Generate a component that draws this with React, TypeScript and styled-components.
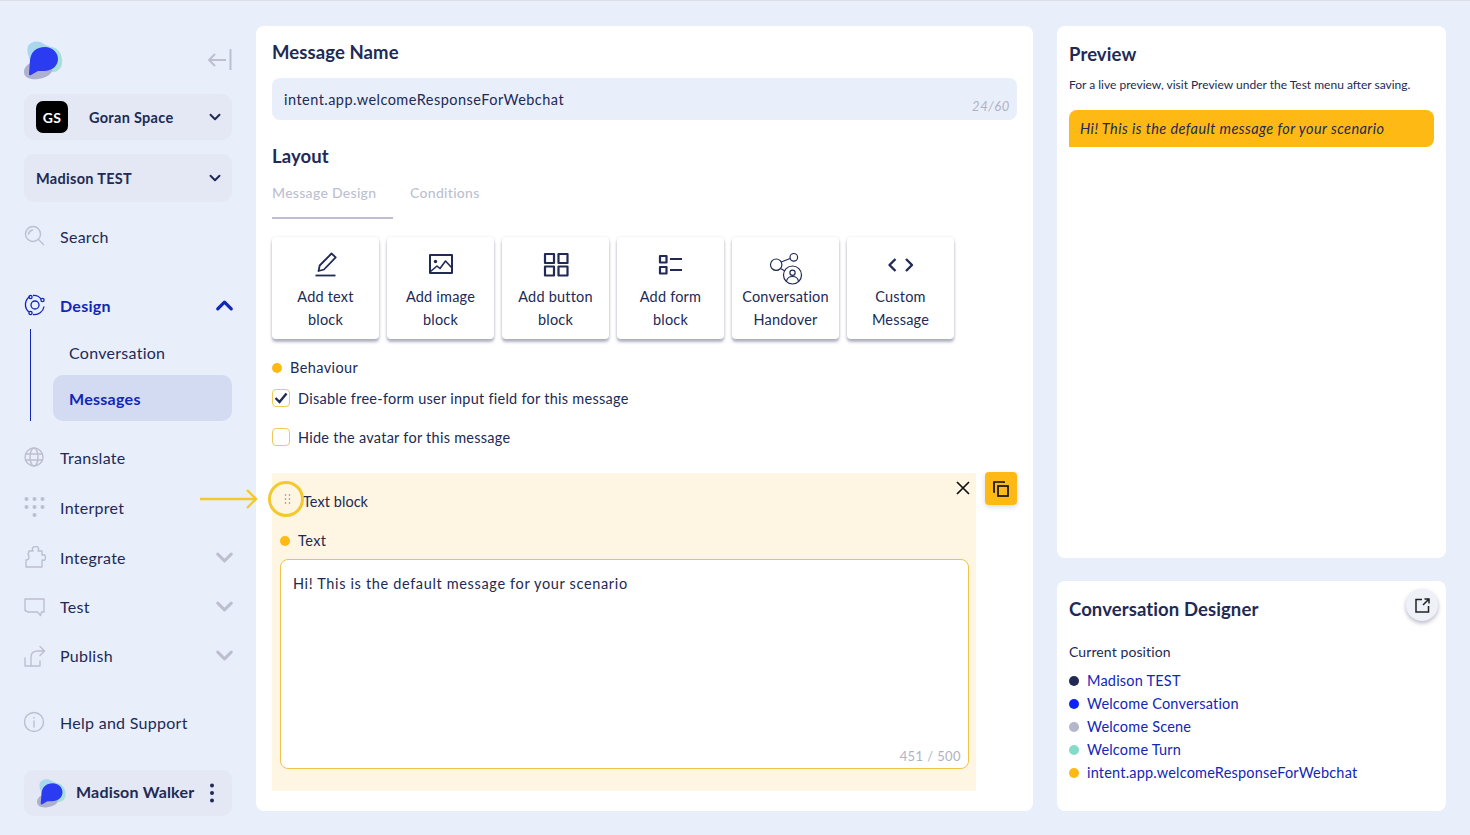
import React from "react";
import styled, { createGlobalStyle } from "styled-components";
import { ChevronDown, ChevronUp } from "lucide-react";

const ink = "#212a55";
const blue = "#1226b8";
const grey = "#bdbfd0";
const amber = "#ffb915";

const GlobalStyle = createGlobalStyle`
  html, body {
    margin: 0;
    padding: 0;
    background: #e9eefb;
  }
  body {
    font-family: "Lato", "Noto Sans", sans-serif;
    color: ${ink};
  }
  * { box-sizing: border-box; }
`;

const Page = styled.div`
  width: 1470px;
  height: 835px;
  display: flex;
  overflow: hidden;
  position: relative;
  border-top: 1px solid #dcdee6;
`;

const Sidebar = styled.aside`
  width: 256px;
  flex: none;
  padding: 39px 24px 0;
  display: flex;
  flex-direction: column;
`;

const LogoRow = styled.div`
  height: 40px;
  display: flex;
  justify-content: space-between;
  align-items: center;
  margin-bottom: 14px;
`;

const SelectBox = styled.div<{ $h: number }>`
  height: ${(p) => p.$h}px;
  background: #e3e8f4;
  border-radius: 10px;
  display: flex;
  align-items: center;
  padding: 0 8px 0 12px;
  margin-bottom: 14px;
  font-size: 14.5px;
  font-weight: 700;
  letter-spacing: 0.3px;
  color: ${ink};
  svg { flex: none; }
`;

const SpaceBadge = styled.div`
  width: 32px;
  height: 32px;
  background: #000;
  color: #fff;
  border-radius: 7px;
  font-size: 14px;
  font-weight: 700;
  display: flex;
  align-items: center;
  justify-content: center;
  margin-right: 21px;
`;

const SelectText = styled.span`
  flex: 1;
`;

const NavItem = styled.div<{ $active?: boolean; $h?: number; $mt?: number }>`
  height: ${(p) => p.$h ?? 50}px;
  margin-top: ${(p) => p.$mt ?? 0}px;
  padding-bottom: 2px;
  display: flex;
  align-items: center;
  font-size: 16px;
  letter-spacing: 0.28px;
  font-weight: ${(p) => (p.$active ? 700 : 400)};
  color: ${(p) => (p.$active ? blue : ink)};
`;

const NavIcon = styled.span`
  width: 36px;
  flex: none;
  display: flex;
  align-items: center;
`;

const NavLabel = styled.span`
  flex: 1;
`;

const NavChevron = styled.span`
  display: flex;
  margin-right: -5.5px;
`;

const SubNav = styled.div`
  margin-left: 6px;
  padding-left: 22px;
  border-left: 1.5px solid ${blue};
  height: 92px;
  margin-bottom: 12px;
  display: flex;
  flex-direction: column;
`;

const SubItem = styled.div<{ $active?: boolean }>`
  height: 46px;
  display: flex;
  align-items: center;
  padding-left: 16px;
  border-radius: 10px;
  font-size: 16px;
  letter-spacing: 0.28px;
  font-weight: ${(p) => (p.$active ? 700 : 400)};
  color: ${(p) => (p.$active ? blue : ink)};
  background: ${(p) => (p.$active ? "#d3dbf3" : "transparent")};
`;

const UserBox = styled.div`
  height: 46px;
  margin-top: 22px;
  background: #e3e8f4;
  border-radius: 10px;
  display: flex;
  align-items: center;
  padding: 0 17px 0 13px;
  font-size: 16px;
  font-weight: 700;
  letter-spacing: 0.18px;
  gap: 9px;
`;

const UserName = styled.span`
  flex: 1;
  margin-bottom: 3px;
`;

const Card = styled.section`
  background: #fff;
  border-radius: 8px;
`;

const MainCard = styled(Card)`
  width: 777px;
  height: 785px;
  margin-top: 25px;
  padding: 15px 16px 16px;
  flex: none;
`;

const H2 = styled.h2`
  margin: 0;
  font-size: 18.5px;
  font-weight: 700;
  letter-spacing: 0.1px;
  line-height: 22px;
  color: ${ink};
`;

const NameInput = styled.div`
  margin-top: 15px;
  height: 42px;
  background: #e9eefb;
  border-radius: 8px;
  display: flex;
  align-items: center;
  justify-content: space-between;
  padding: 0 7px 0 12px;
  font-size: 14.5px;
  letter-spacing: 0.47px;
`;

const Counter = styled.span`
  font-size: 13px;
  font-style: italic;
  color: #b0b2c4;
  align-self: flex-end;
  margin-bottom: 6px;
  letter-spacing: 0.6px;
`;

const LayoutTitle = styled(H2)`
  margin-top: 25px;
`;

const Tabs = styled.div`
  display: flex;
  margin-top: 14px;
  height: 38px;
`;

const Tab = styled.div<{ $active?: boolean }>`
  width: ${(p) => (p.$active ? "121px" : "auto")};
  margin-right: 17px;
  font-size: 14px;
  font-weight: 500;
  letter-spacing: 0.3px;
  line-height: 18px;
  padding-top: 3px;
  color: ${grey};
  border-bottom: ${(p) => (p.$active ? `2px solid ${grey}` : "none")};
`;

const Tiles = styled.div`
  display: flex;
  gap: 8px;
  margin-top: 18px;
`;

const Tile = styled.div`
  width: 107px;
  height: 102px;
  background: #fff;
  border-radius: 4px;
  box-shadow: 0 3px 3px rgba(70, 75, 110, 0.42), 0 0 3px rgba(70, 75, 110, 0.12);
  display: flex;
  flex-direction: column;
  align-items: center;
  text-align: center;
  font-size: 14.5px;
  line-height: 23px;
  letter-spacing: 0.2px;
`;

const TileIcon = styled.div`
  height: 35px;
  margin-top: 13px;
  display: flex;
  align-items: flex-start;
  justify-content: center;
`;

const DotLabel = styled.div<{ $mt: number }>`
  margin-top: ${(p) => p.$mt}px;
  display: flex;
  align-items: center;
  gap: 8px;
  font-size: 14.5px;
  letter-spacing: 0.4px;
  line-height: 20px;
`;

const Dot = styled.span<{ $c: string; $s?: number }>`
  width: ${(p) => p.$s ?? 10}px;
  height: ${(p) => p.$s ?? 10}px;
  border-radius: 50%;
  background: ${(p) => p.$c};
  flex: none;
`;

const CheckRow = styled.div<{ $mt: number }>`
  margin-top: ${(p) => p.$mt}px;
  display: flex;
  align-items: center;
  gap: 8px;
  height: 20px;
  font-size: 14.5px;
  letter-spacing: 0.26px;
`;

const CheckBox = styled.span`
  width: 18px;
  height: 18px;
  border: 1px solid #f2c95e;
  border-radius: 4px;
  display: flex;
  align-items: center;
  justify-content: center;
  flex: none;
`;

const BlockRow = styled.div`
  display: flex;
  margin-top: 26px;
  gap: 9px;
  align-items: flex-start;
`;

const TextBlock = styled.div`
  width: 704px;
  height: 318px;
  background: #fff5e3;
  padding: 19px 8px 0;
  position: relative;
`;

const BlockTitle = styled.div`
  font-size: 14.5px;
  letter-spacing: 0.05px;
  line-height: 20px;
  padding-left: 23px;
`;

const TextArea = styled.div`
  margin-top: 8px;
  width: 689px;
  height: 210px;
  background: #fff;
  border: 1px solid #f0c44a;
  border-radius: 8px;
  padding: 14px 12px;
  font-size: 14.5px;
  letter-spacing: 0.65px;
  line-height: 20px;
  position: relative;
`;

const CharCount = styled.span`
  position: absolute;
  right: 7px;
  bottom: 2px;
  font-size: 13px;
  letter-spacing: 0.4px;
  color: #b0b2c4;
`;

const CloseBtn = styled.span`
  position: absolute;
  top: 8px;
  right: 6px;
  display: flex;
`;

const CopyBtn = styled.div`
  width: 32px;
  height: 33px;
  margin-top: -1px;
  background: ${amber};
  border-radius: 4px;
  box-shadow: 0 2px 5px rgba(70, 75, 110, 0.2);
  display: flex;
  align-items: center;
  justify-content: center;
`;

const Ring = styled.div`
  position: absolute;
  left: -4px;
  top: 8px;
  width: 36px;
  height: 36px;
  padding-left: 3px;
  border: 3px solid #f3c92f;
  border-radius: 50%;
  display: flex;
  align-items: center;
  justify-content: center;
`;

const ArrowMark = styled.svg`
  position: absolute;
  left: 200px;
  top: 487px;
`;

const RightColumn = styled.div`
  margin-left: 24px;
  width: 389px;
  flex: none;
  margin-top: 25px;
  display: flex;
  flex-direction: column;
  gap: 23px;
`;

const PreviewCard = styled(Card)`
  height: 532px;
  padding: 17px 12px;
`;

const DesignerCard = styled(Card)`
  height: 230px;
  padding: 17px 12px;
  position: relative;
`;

const SideNote = styled.p`
  margin: 11px 0 0;
  font-size: 12px;
  letter-spacing: 0;
  line-height: 18px;
`;

const Bubble = styled.div`
  margin-top: 16px;
  height: 37px;
  background: ${amber};
  border-radius: 8px 8px 8px 0;
  padding: 0 11px;
  display: flex;
  align-items: center;
  font-size: 14.5px;
  font-style: italic;
  letter-spacing: 0.42px;
`;

const ExternalBtn = styled.div`
  position: absolute;
  top: 8px;
  right: 8px;
  width: 32px;
  height: 32px;
  border-radius: 50%;
  background: #eef1f8;
  box-shadow: 0 2px 4px rgba(70, 75, 110, 0.4);
  display: flex;
  align-items: center;
  justify-content: center;
`;

const PositionTitle = styled.div`
  margin-top: 22px;
  font-size: 14px;
  letter-spacing: 0.1px;
  line-height: 20px;
`;

const PositionList = styled.ul`
  list-style: none;
  margin: 7px 0 0;
  padding: 0;
`;

const PositionItem = styled.li`
  height: 23px;
  display: flex;
  align-items: center;
  gap: 8px;
  font-size: 14.5px;
  letter-spacing: 0.2px;
  color: ${blue};
`;

const Logo = ({ size }: { size: number }) => (
  <svg width={size} height={size} viewBox="0 0 40 40">
    <path d="M4 6c3-5 11-6 16-2 4 3 10 3 13 5l-4 20L8 24C5 18 2 11 4 6z" fill="#a9d8ee" />
    <path d="M26 8c6-1 11 3 12 11 1 7-2 12-8 13-6 1-12-2-12-10s3-13 8-14z" fill="#a8e0d8" />
    <path d="M0 32c0-6 6-10 12-10s16 4 16 8-6 8-14 9C7 40 0 38 0 32z" fill="#aeb0cf" />
    <path d="M5 34l1-14C7 12 12 7 21 7c7 0 13 5 13 12s-6 12-14 12h-6l-7 4c-1 .5-2 .2-2-1z" fill="#2b3bf2" />
  </svg>
);

const NavGlyph = ({ children }: { children: React.ReactNode }) => (
  <svg width="22" height="22" viewBox="0 0 22 22" fill="none" stroke={grey} strokeWidth="1.4" strokeLinecap="round" strokeLinejoin="round">
    {children}
  </svg>
);

const TileGlyph = ({ children }: { children: React.ReactNode }) => (
  <svg width="34" height="36" viewBox="0 0 34 36" fill="none" stroke={ink} strokeLinejoin="round">
    {children}
  </svg>
);

const GreyChevron = () => (
  <NavChevron>
    <ChevronDown size={27} strokeWidth={2.7} color={grey} />
  </NavChevron>
);

const tiles = [
  {
    label: ["Add text", "block"],
    icon: (
      <TileGlyph>
        <path d="M9.500 21l1.200-5.500L22.500 3.500l4.200 3.800L15 19.500z" strokeWidth="1.800" />
        <path d="M6.500 25.500h20" strokeWidth="1.800" />
      </TileGlyph>
    ),
  },
  {
    label: ["Add image", "block"],
    icon: (
      <TileGlyph>
        <rect x="6" y="5" width="22" height="18" strokeWidth="2" />
        <circle cx="11.500" cy="11.500" r="1.700" fill={ink} stroke="none" />
        <path d="M6.500 21.500l6.500-5.500 3 2.500 5.500-7.500 6.500 7" strokeWidth="1.600" />
      </TileGlyph>
    ),
  },
  {
    label: ["Add button", "block"],
    icon: (
      <TileGlyph>
        <rect x="6" y="4" width="9" height="9" strokeWidth="2.200" />
        <rect x="19.500" y="4" width="9" height="9" strokeWidth="2.200" />
        <rect x="6" y="16.500" width="9" height="9" strokeWidth="2.200" />
        <rect x="19.500" y="16.500" width="9" height="9" strokeWidth="2.200" />
      </TileGlyph>
    ),
  },
  {
    label: ["Add form", "block"],
    icon: (
      <TileGlyph>
        <rect x="6" y="6" width="6.500" height="6.500" strokeWidth="2.200" />
        <rect x="6" y="17" width="6.500" height="6.500" strokeWidth="2.200" />
        <path d="M16 9h12M16 20h12" strokeWidth="2.200" />
      </TileGlyph>
    ),
  },
  {
    label: ["Conversation", "Handover"],
    icon: (
      <TileGlyph>
        <circle cx="7.200" cy="14.700" r="5.700" strokeWidth="1.200" />
        <circle cx="24.800" cy="7.300" r="3.800" strokeWidth="1.200" />
        <circle cx="23.500" cy="25" r="9" strokeWidth="1.200" />
        <path d="M12.200 12l9-3.500M11.500 18.500l4.500 2.500" strokeWidth="1.200" />
        <circle cx="23.500" cy="22.700" r="2.600" strokeWidth="1.200" />
        <path d="M17.500 31.500c.5-3.500 2.800-5 6-5s5.500 1.500 6 5" strokeWidth="1.200" />
      </TileGlyph>
    ),
  },
  {
    label: ["Custom", "Message"],
    icon: (
      <TileGlyph>
        <path d="M11.500 9l-6 6 6 6M22 9l6 6-6 6" strokeWidth="2.400" />
      </TileGlyph>
    ),
  },
];

const positions = [
  { c: ink, t: "Madison TEST" },
  { c: "#0f24f2", t: "Welcome Conversation" },
  { c: "#b5b5cc", t: "Welcome Scene" },
  { c: "#82dcc9", t: "Welcome Turn" },
  { c: amber, t: "intent.app.welcomeResponseForWebchat" },
];

const App: React.FC = () => {
  return (
    <>
      <GlobalStyle />
      <Page>
        <Sidebar>
          <LogoRow>
            <Logo size={40} />
            <svg width="25" height="22" viewBox="0 0 25 22" fill="none" stroke={grey} strokeWidth="2">
              <path d="M23.500 0v21M19 11H2M8 5l-6 6 6 6" />
            </svg>
          </LogoRow>
          <SelectBox $h={46}>
            <SpaceBadge>GS</SpaceBadge>
            <SelectText>Goran Space</SelectText>
            <ChevronDown size={18} strokeWidth={2.6} />
          </SelectBox>
          <SelectBox $h={48}>
            <SelectText>Madison TEST</SelectText>
            <ChevronDown size={18} strokeWidth={2.6} />
          </SelectBox>
          <NavItem $h={42}>
            <NavIcon>
              <NavGlyph>
                <circle cx="9" cy="9" r="7.500" />
                <path d="M4.500 9c.5-2 2-3.500 4-4M14.500 14.500l5 5" />
              </NavGlyph>
            </NavIcon>
            <NavLabel>Search</NavLabel>
          </NavItem>
          <NavItem $active $mt={25} $h={46}>
            <NavIcon>
              <svg width="22" height="22" viewBox="0 0 22 22" fill="none" stroke={blue} strokeWidth="1.300">
                <circle cx="11" cy="11" r="4" />
                <path d="M6 2.500A9.500 9.500 0 0 0 5 18M9 20.500a9.500 9.500 0 0 0 11-8M17 5a9 9 0 0 0-8-3.500" />
                <circle cx="6.500" cy="3" r="1.600" />
                <circle cx="18.500" cy="6" r="1.600" />
                <circle cx="6.500" cy="19" r="1.600" />
              </svg>
            </NavIcon>
            <NavLabel>Design</NavLabel>
            <NavChevron>
              <ChevronUp size={27} strokeWidth={2.9} color={blue} />
            </NavChevron>
          </NavItem>
          <SubNav>
            <SubItem>Conversation</SubItem>
            <SubItem $active>Messages</SubItem>
          </SubNav>
          <NavItem>
            <NavIcon>
              <NavGlyph>
                <circle cx="10" cy="11" r="9" />
                <ellipse cx="10" cy="11" rx="4" ry="9" />
                <path d="M1.500 8h17M1.500 14h17" />
              </NavGlyph>
            </NavIcon>
            <NavLabel>Translate</NavLabel>
          </NavItem>
          <NavItem>
            <NavIcon>
              <svg width="22" height="22" viewBox="0 0 22 22" fill={grey}>
                <circle cx="2.500" cy="3" r="2" />
                <circle cx="10.500" cy="3" r="2" />
                <circle cx="18.500" cy="3" r="2" />
                <circle cx="2.500" cy="11" r="2" />
                <circle cx="10.500" cy="11" r="2" />
                <circle cx="18.500" cy="11" r="2" />
                <circle cx="10.500" cy="19" r="2" />
              </svg>
            </NavIcon>
            <NavLabel>Interpret</NavLabel>
          </NavItem>
          <NavItem>
            <NavIcon>
              <NavGlyph>
                <path d="M5 5h4c-1.500-3 0-4.500 2.500-4.500s4 1.500 2.500 4.500h4v4c2.500-1 3.500.5 3.500 2.500s-1 3.500-3.500 2.500v7H2v-7c2 0 3-1 3-3s-1-2.500-1-2.500z" />
              </NavGlyph>
            </NavIcon>
            <NavLabel>Integrate</NavLabel>
            <GreyChevron />
          </NavItem>
          <NavItem $h={49}>
            <NavIcon>
              <NavGlyph>
                <path d="M1 3h19v13h-2.500l-1 3.500-3-3.500H4l-3-1.500z" />
              </NavGlyph>
            </NavIcon>
            <NavLabel>Test</NavLabel>
            <GreyChevron />
          </NavItem>
          <NavItem $h={49}>
            <NavIcon>
              <NavGlyph>
                <path d="M1 13v8h15v-5M7 20V12c0-4 3-6 7-6h6M16 1.500L20.500 6 16 10.500" />
              </NavGlyph>
            </NavIcon>
            <NavLabel>Publish</NavLabel>
            <GreyChevron />
          </NavItem>
          <NavItem $mt={17} $h={50}>
            <NavIcon>
              <NavGlyph>
                <circle cx="10" cy="11" r="9.500" />
                <path d="M10 10v6M10 6.500v.5" />
              </NavGlyph>
            </NavIcon>
            <NavLabel>Help and Support</NavLabel>
          </NavItem>
          <UserBox>
            <Logo size={30} />
            <UserName>Madison Walker</UserName>
            <svg width="6" height="20" viewBox="0 0 6 20" fill={ink}>
              <circle cx="3" cy="2.500" r="2" />
              <circle cx="3" cy="10" r="2" />
              <circle cx="3" cy="17.500" r="2" />
            </svg>
          </UserBox>
        </Sidebar>

        <MainCard>
          <H2>Message Name</H2>
          <NameInput>
            intent.app.welcomeResponseForWebchat
            <Counter>24/60</Counter>
          </NameInput>
          <LayoutTitle>Layout</LayoutTitle>
          <Tabs>
            <Tab $active>Message Design</Tab>
            <Tab>Conditions</Tab>
          </Tabs>
          <Tiles>
            {tiles.map((tile) => (
              <Tile key={tile.label[0]}>
                <TileIcon>{tile.icon}</TileIcon>
                <span>{tile.label[0]}</span>
                <span>{tile.label[1]}</span>
              </Tile>
            ))}
          </Tiles>
          <DotLabel $mt={19}>
            <Dot $c={amber} />
            Behaviour
          </DotLabel>
          <CheckRow $mt={10}>
            <CheckBox>
              <svg width="14" height="12" viewBox="0 0 14 12" fill="none" stroke={ink} strokeWidth="2.400">
                <path d="M1.500 6l4 4 7-8.500" />
              </svg>
            </CheckBox>
            Disable free-form user input field for this message
          </CheckRow>
          <CheckRow $mt={19}>
            <CheckBox />
            Hide the avatar for this message
          </CheckRow>
          <BlockRow>
            <TextBlock>
              <Ring>
                <svg width="8" height="10" viewBox="0 0 8 10" fill="#8b8577">
                  <circle cx="1.500" cy="1" r=".8" />
                  <circle cx="5.500" cy="1" r=".8" />
                  <circle cx="1.500" cy="5" r=".8" />
                  <circle cx="5.500" cy="5" r=".8" />
                  <circle cx="1.500" cy="9" r=".8" />
                  <circle cx="5.500" cy="9" r=".8" />
                </svg>
              </Ring>
              <CloseBtn>
                <svg width="14" height="14" viewBox="0 0 14 14" stroke="#111" strokeWidth="1.700">
                  <path d="M1 1l12 12M13 1L1 13" />
                </svg>
              </CloseBtn>
              <BlockTitle>Text block</BlockTitle>
              <DotLabel $mt={19}>
                <Dot $c={amber} />
                Text
              </DotLabel>
              <TextArea>
                Hi! This is the default message for your scenario
                <CharCount>451 / 500</CharCount>
              </TextArea>
            </TextBlock>
            <CopyBtn>
              <svg width="16" height="16" viewBox="0 0 16 16" fill="none" stroke="#111" strokeWidth="1.700">
                <rect x="5" y="5" width="10" height="10" />
                <path d="M11 2V1H1v10h1" />
              </svg>
            </CopyBtn>
          </BlockRow>
        </MainCard>

        <RightColumn>
          <PreviewCard>
            <H2>Preview</H2>
            <SideNote>For a live preview, visit Preview under the Test menu after saving.</SideNote>
            <Bubble>Hi! This is the default message for your scenario</Bubble>
          </PreviewCard>
          <DesignerCard>
            <H2>Conversation Designer</H2>
            <ExternalBtn>
              <svg width="15" height="15" viewBox="0 0 15 15" fill="none" stroke="#222" strokeWidth="1.500">
                <path d="M7 1.500H1v12.500h12.500V8M8 7l6-6M9.500 1H14v4.500" />
              </svg>
            </ExternalBtn>
            <PositionTitle>Current position</PositionTitle>
            <PositionList>
              {positions.map((pos) => (
                <PositionItem key={pos.t}>
                  <Dot $c={pos.c} />
                  {pos.t}
                </PositionItem>
              ))}
            </PositionList>
          </DesignerCard>
        </RightColumn>

        <ArrowMark width="58" height="22" viewBox="0 0 58 22" fill="none" stroke="#f3c92f" strokeWidth="2.400">
          <path d="M0 11h56M47 2l9 9-9 9" />
        </ArrowMark>
      </Page>
    </>
  );
};

export default App;
